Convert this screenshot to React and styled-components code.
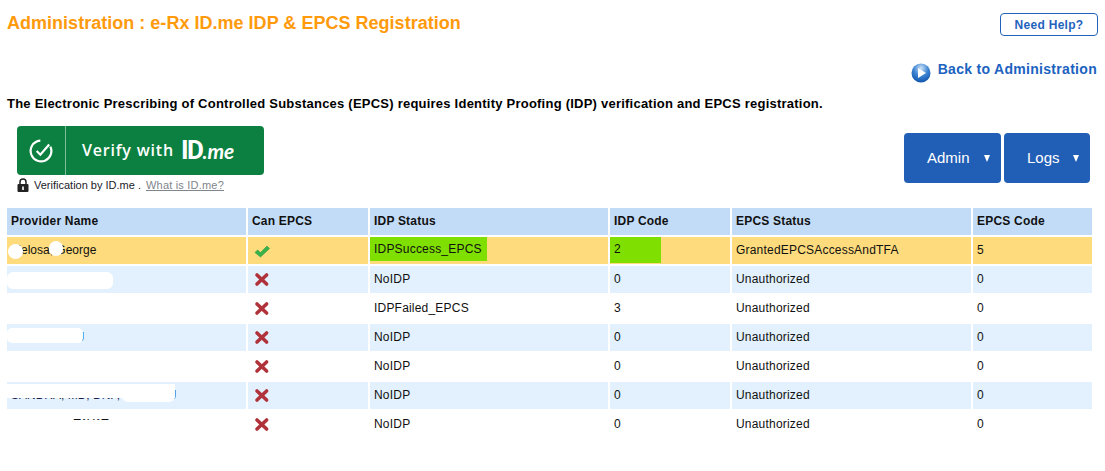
import React from 'react';
import styled, { createGlobalStyle } from 'styled-components';

const GlobalStyle = createGlobalStyle`
body {
  margin: 0;
  background: #fff;
  font-family: "Liberation Sans", Arial, sans-serif;
}
`;

const Page = styled.div`
width: 1105px;
height: 471px;
overflow: hidden;
`;
const TitleBar = styled.div`
display: flex;
justify-content: space-between;
align-items: flex-start;
padding: 13px 7px 0 7px;
height: 35px;
box-sizing: border-box;
`;
const Title = styled.h1`
margin: 0;
font-size: 18px;
line-height: 21px;
font-weight: 700;
letter-spacing: 0.02px;
color: #ff9a0d;
`;
const HelpButton = styled.button`
width: 98px;
height: 23px;
padding: 0;
background: #fff;
border: 1px solid #1f63bd;
border-radius: 4px;
color: #1f63bd;
font-family: inherit;
font-size: 12px;
font-weight: 700;
letter-spacing: 0.3px;
`;
const BackRow = styled.div`
display: flex;
justify-content: flex-end;
align-items: flex-start;
gap: 7px;
padding: 25px 8px 0 0;
height: 34px;
`;
const BackLink = styled.a`
font-size: 14px;
line-height: 18px;
font-weight: 700;
color: #1b62c0;
letter-spacing: 0.3px;
`;
const BackIcon = styled.svg`
width: 20px;
height: 20px;
margin-top: 3px;
`;
const Intro = styled.p`
margin: 0;
padding: 2px 0 0 7px;
height: 32px;
box-sizing: border-box;
font-size: 13px;
line-height: 15px;
font-weight: 700;
color: #000;
letter-spacing: 0.23px;
white-space: nowrap;
`;
const ToolRow = styled.div`
display: flex;
justify-content: space-between;
align-items: flex-start;
padding: 0 15px 0 17px;
height: 80px;
`;
const VerifyButton = styled.div`
display: flex;
align-items: center;
width: 247px;
height: 49px;
border-radius: 4px;
background: #0b8040;
color: #fff;
`;
const VerifyMark = styled.div`
display: flex;
align-items: center;
justify-content: center;
width: 48px;
height: 49px;
border-right: 1px solid #7fbd9b;
`;
const VerifyText = styled.span`
margin: 0 0 2px 16px;
font-family: "Open Sans", sans-serif;
font-size: 16px;
font-weight: 600;
letter-spacing: 0.8px;
`;
const LogoId = styled.span`
margin: 0 0 2px 7px;
font-family: "Roboto", sans-serif;
font-size: 26px;
font-weight: 700;
letter-spacing: -1.5px;
`;
const LogoMe = styled.span`
margin: 0 0 1px 0;
font-family: "Lato", sans-serif;
font-size: 21px;
font-style: italic;
font-weight: 700;
`;
const Caption = styled.div`
display: flex;
align-items: center;
margin-top: 2px;
height: 15px;
font-size: 11px;
color: #1a1a2a;
`;
const LockIcon = styled.svg`
width: 12px;
height: 14px;
margin-right: 5px;
`;
const CaptionLink = styled.a`
margin-left: 5px;
color: #7f858d;
letter-spacing: 0.2px;
text-decoration: underline;
`;
const MenuGroup = styled.div`
display: flex;
gap: 3px;
margin-top: 7px;
`;
const MenuButton = styled.button`
display: flex;
align-items: center;
justify-content: space-between;
width: ${(p) => p.$width}px;
height: 50px;
padding: 0 9px 2px 23px;
box-sizing: border-box;
border: none;
border-radius: 4px;
background: #215eb5;
color: #fff;
font-family: inherit;
font-size: 15px;
`;
const Caret = styled.i`
width: 0;
height: 0;
border-left: 3.5px solid transparent;
border-right: 3.5px solid transparent;
border-top: 7px solid #fff;
margin: 3px ${(p) => p.$gap || 0}px 0 0;
`;
const Table = styled.table`
margin-left: 5px;
width: 1089px;
table-layout: fixed;
border-collapse: separate;
border-spacing: 2px;
font-size: 12px;
color: #111;
`;
const HeadCell = styled.th`
height: 27px;
padding: 0 4px 2px;
box-sizing: border-box;
background: #c2dcf7;
text-align: left;
font-weight: 700;
letter-spacing: 0.2px;
`;
const rowColors = { selected: '#fedb7c', tint: '#e2f1fd', plain: '#fff' };
const Cell = styled.td`
position: relative;
height: 27px;
padding: ${(p) => (p.$flush ? '0 4px' : '0 4px 2px')};
box-sizing: border-box;
background: ${(p) => rowColors[p.$tone]};
vertical-align: ${(p) => (p.$flush ? 'top' : 'middle')};
white-space: nowrap;
letter-spacing: 0.2px;
`;
const Highlight = styled.div`
width: ${(p) => p.$width}px;
height: ${(p) => p.$height}px;
margin-left: -4px;
padding-left: 4px;
box-sizing: border-box;
background: #7fdf00;
line-height: 24px;
`;
const Blot = styled.span`
position: absolute;
left: ${(p) => p.$x}px;
top: ${(p) => p.$y}px;
width: ${(p) => p.$w}px;
height: ${(p) => p.$h}px;
border-radius: ${(p) => p.$r || 0}px;
background: #fff;
`;
const StatusIcon = styled.svg`
display: block;
width: 16px;
height: 15px;
margin: 2px 0 0 2px;
`;
const NameText = styled.span`
color: ${(p) => p.$color || '#111'};
letter-spacing: 0;
`;

const CheckMark = () => (
  <svg width="24" height="24" viewBox="0 0 22 22" fill="none">
    <circle cx="11" cy="11" r="9.5" stroke="#fff" strokeWidth="2" strokeDasharray="48 12" transform="rotate(-25 11 11)" />
    <path d="M7 11l3.4 3.4L18.5 5" stroke="#fff" strokeWidth="2" />
  </svg>
);

const Can = ({ ok }) =>
  ok ? (
    <StatusIcon viewBox="0 0 16 15">
      <path d="M1 9.5l2.5-2.5 3 2.6L13 3l2.5 2.6L6.5 14z" fill="#37b34a" stroke="#2f9a43" strokeWidth="0.6" />
    </StatusIcon>
  ) : (
    <StatusIcon viewBox="0 0 16 15">
      <path d="M3 3l9.6 9M12.6 3L3 12" stroke="#b0323a" strokeWidth="3.6" strokeLinecap="round" />
    </StatusIcon>
  );

const rows = [
  { tone: 'selected', name: 'Melosa, George', ok: true, status: 'IDPSuccess_EPCS', code: 2, epcs: 'GrantedEPCSAccessAndTFA', epcsCode: 5,
    blots: [{ x: 1, y: 7, w: 15, h: 15, r: 8 }, { x: 42, y: 4, w: 14, h: 15, r: 7 }] },
  { tone: 'tint', name: '', ok: false, status: 'NoIDP', code: 0, epcs: 'Unauthorized', epcsCode: 0,
    blots: [{ x: 0, y: 6, w: 106, h: 17, r: 6 }] },
  { tone: 'plain', name: '', ok: false, status: 'IDPFailed_EPCS', code: 3, epcs: 'Unauthorized', epcsCode: 0, blots: [] },
  { tone: 'tint', name: 'XXXXXXXXIJ', color: '#123f9c', ok: false, status: 'NoIDP', code: 0, epcs: 'Unauthorized', epcsCode: 0,
    blots: [{ x: 0, y: 4, w: 76, h: 15, r: 5 }] },
  { tone: 'plain', name: '', ok: false, status: 'NoIDP', code: 0, epcs: 'Unauthorized', epcsCode: 0, blots: [] },
  { tone: 'tint', name: 'SANDRA, MD, DNP, XXXXXIIJ', color: '#1a1a4a', ok: false, status: 'NoIDP', code: 0, epcs: 'Unauthorized', epcsCode: 0,
    blots: [{ x: 0, y: 2, w: 168, h: 14 }, { x: 115, y: 3, w: 53, h: 17, r: 6 }] },
  { tone: 'plain', name: 'XXXXXXXI TAYAT', ok: false, status: 'NoIDP', code: 0, epcs: 'Unauthorized', epcsCode: 0,
    blots: [{ x: 0, y: 9, w: 130, h: 15 }, { x: 0, y: 2, w: 65, h: 10 }] },
];

const App = () => (
  <Page>
    <GlobalStyle />
    <TitleBar>
      <Title>Administration : e-Rx ID.me IDP &amp; EPCS Registration</Title>
      <HelpButton>Need Help?</HelpButton>
    </TitleBar>
    <BackRow>
      <BackIcon viewBox="0 0 20 20">
        <defs>
          <radialGradient id="ball" cx="50%" cy="25%" r="75%">
            <stop offset="0" stopColor="#cfe3f7" />
            <stop offset="0.5" stopColor="#3f86d4" />
            <stop offset="1" stopColor="#0f54ad" />
          </radialGradient>
        </defs>
        <circle cx="10" cy="10" r="9.5" fill="url(#ball)" />
        <path d="M7 5l8 5-8 5z" fill="#fff" />
      </BackIcon>
      <BackLink>Back to Administration</BackLink>
    </BackRow>
    <Intro>The Electronic Prescribing of Controlled Substances (EPCS) requires Identity Proofing (IDP) verification and EPCS registration.</Intro>
    <ToolRow>
      <div>
        <VerifyButton>
          <VerifyMark><CheckMark /></VerifyMark>
          <VerifyText>Verify with</VerifyText>
          <LogoId>ID</LogoId>
          <LogoMe>.me</LogoMe>
        </VerifyButton>
        <Caption>
          <LockIcon viewBox="0 0 12 14">
            <path d="M3 6V4a3 3 0 016 0v2" fill="none" stroke="#222" strokeWidth="1.5" />
            <rect x="0.5" y="6" width="11" height="8" rx="1" fill="#222" />
            <rect x="5.2" y="8.5" width="1.6" height="3.5" fill="#fff" />
          </LockIcon>
          Verification by ID.me .
          <CaptionLink>What is ID.me?</CaptionLink>
        </Caption>
      </div>
      <MenuGroup>
        <MenuButton $width={97}>Admin<Caret $gap={2} /></MenuButton>
        <MenuButton $width={86}>Logs<Caret $gap={2} /></MenuButton>
      </MenuGroup>
    </ToolRow>
    <Table>
      <colgroup>
        <col style={{ width: 239 }} />
        <col style={{ width: 120 }} />
        <col style={{ width: 238 }} />
        <col style={{ width: 120 }} />
        <col style={{ width: 239 }} />
        <col />
      </colgroup>
      <thead>
        <tr>
          <HeadCell>Provider Name</HeadCell>
          <HeadCell>Can EPCS</HeadCell>
          <HeadCell>IDP Status</HeadCell>
          <HeadCell>IDP Code</HeadCell>
          <HeadCell>EPCS Status</HeadCell>
          <HeadCell>EPCS Code</HeadCell>
        </tr>
      </thead>
      <tbody>
        {rows.map((r, i) => (
          <tr key={i}>
            <Cell $tone={r.tone}>
              <NameText $color={r.color}>{r.name}</NameText>
              {r.blots.map((b, j) => (
                <Blot key={j} $x={b.x} $y={b.y} $w={b.w} $h={b.h} $r={b.r} />
              ))}
            </Cell>
            <Cell $tone={r.tone}><Can ok={r.ok} /></Cell>
            <Cell $tone={r.tone} $flush={r.ok}>
              {r.ok ? <Highlight $width={117} $height={24}>{r.status}</Highlight> : r.status}
            </Cell>
            <Cell $tone={r.tone} $flush={r.ok}>
              {r.ok ? <Highlight $width={51} $height={26}>{r.code}</Highlight> : r.code}
            </Cell>
            <Cell $tone={r.tone}>{r.epcs}</Cell>
            <Cell $tone={r.tone}>{r.epcsCode}</Cell>
          </tr>
        ))}
      </tbody>
    </Table>
  </Page>
);

export default App;
